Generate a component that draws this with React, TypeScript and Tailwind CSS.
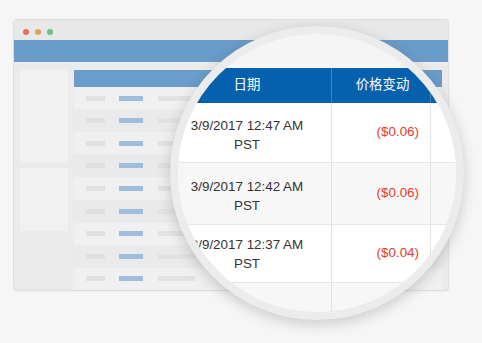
import React from "react";

const font = { fontFamily: '"Liberation Sans", Arial, "Noto Sans CJK SC", sans-serif' };

function MiniRow({ i }: { i: number }) {
  const h = i % 2 === 0 ? "h-[24px]" : "h-[25px]";
  const bg = i % 2 === 0 ? "bg-[#f0f0f0]" : "bg-[#eaeaea]";
  return (
    <div className={`${h} ${bg} flex items-center pl-[12px]`}>
      <div className="w-[19px] h-[5px] bg-[#e0e0e0]" />
      <div className="ml-[14px] w-[24px] h-[5px] bg-[#9dbfdd]" />
      <div className="ml-[15px] w-[37px] h-[5px] bg-[#e2e2e2]" />
    </div>
  );
}

function BigRow({
  date,
  value,
  h,
  pt,
  bg,
}: {
  date: string;
  value: string;
  h: string;
  pt: string;
  bg: string;
}) {
  return (
    <div className={`flex ${h} ${bg} border-b border-[#e6e6e6]`}>
      <div className={`w-[168px] flex items-center justify-center ${pt}`}>
        <div className="text-center text-[13.4px] leading-[19px] text-[#333333]">
          <div className="whitespace-nowrap">{date}</div>
          <div>PST</div>
        </div>
      </div>
      <div className="w-[99px] border-l border-[#e3e3e3] flex items-center justify-end pr-[11px] text-[13.4px] text-[#e8392c]">
        {value}
      </div>
      <div className="flex-1 border-l border-[#e3e3e3]" />
    </div>
  );
}

export default function App() {
  return (
    <div className="relative w-[482px] h-[343px] bg-[#f6f6f6] overflow-hidden" style={font}>
      {/* browser window */}
      <div className="ml-[14px] pt-[20px]">
        <div className="w-[434px] h-[270px] rounded-[3px] overflow-hidden bg-[#ebebeb] shadow-[0_0_0_1px_#dedede,0_1px_3px_rgba(0,0,0,0.08)] flex flex-col">
          <div className="h-[20px] bg-[#e8e8e8] flex items-start pt-[9px] pl-[9px] gap-[6px]">
            <div className="w-[6px] h-[6px] rounded-full bg-[#ee6b5d]" />
            <div className="w-[6px] h-[6px] rounded-full bg-[#dca35b]" />
            <div className="w-[6px] h-[6px] rounded-full bg-[#6dbf82]" />
          </div>
          <div className="h-[22px] bg-[#6a9cca]" />
          <div className="flex flex-1 min-h-0">
            <div className="w-[60px] px-[6px] pt-[8px] flex flex-col gap-[6px]">
              <div className="h-[92px] bg-[#f1f1f1]" />
              <div className="h-[63px] bg-[#f1f1f1]" />
            </div>
            <div className="w-[368px] pt-[8px] flex flex-col overflow-hidden">
              <div className="h-[17px] bg-[#6b9dcb] shrink-0" />
              {Array.from({ length: 9 }).map((_, i) => (
                <MiniRow key={i} i={i} />
              ))}
            </div>
          </div>
        </div>
      </div>

      {/* magnifier */}
      <div className="absolute left-[170px] top-[26px] w-[294px] h-[294px] rounded-full bg-[#ececec] p-[8px] shadow-[0_4px_14px_rgba(0,0,0,0.18)]">
        <div className="w-[278px] h-[278px] rounded-full overflow-hidden bg-[#f5f5f5]">
          <div className="ml-[-15px] w-[320px] mt-[34px]">
            <div className="flex h-[35px] bg-[#0561ae] text-white text-[13.4px]">
              <div className="w-[168px] flex items-center justify-center">日期</div>
              <div className="w-[99px] border-l border-[#3f86c4] flex items-center justify-center pl-[3px]">
                价格变动
              </div>
              <div className="flex-1 border-l border-[#3f86c4]" />
            </div>
            <BigRow date="3/9/2017 12:47 AM" value="($0.06)" h="h-[60px]" pt="pt-[4px]" bg="bg-white" />
            <BigRow date="3/9/2017 12:42 AM" value="($0.06)" h="h-[62px]" pt="pt-[4px]" bg="bg-[#f7f7f7]" />
            <BigRow date="3/9/2017 12:37 AM" value="($0.04)" h="h-[58px]" pt="pt-0" bg="bg-white" />
            <div className="flex h-[60px] bg-[#f7f7f7]">
              <div className="w-[168px]" />
              <div className="w-[99px] border-l border-[#e3e3e3]" />
              <div className="flex-1 border-l border-[#e3e3e3]" />
            </div>
          </div>
        </div>
      </div>
    </div>
  );
}
